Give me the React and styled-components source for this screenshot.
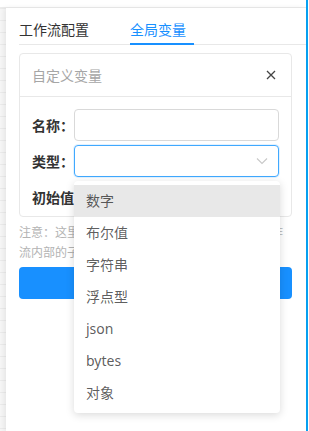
import React from "react";
import styled, { createGlobalStyle } from "styled-components";

const Global = createGlobalStyle`
  html, body { margin: 0; padding: 0; background: #fff; }
  body {
    font-family: "Noto Sans", "Noto Sans CJK SC", sans-serif;
    font-size: 14px;
    color: rgba(0,0,0,0.65);
  }
  * { box-sizing: border-box; }
`;

const Page = styled.div`
  display: flex;
  width: 309px;
  height: 431px;
  overflow: hidden;
`;

const Main = styled.div`
  flex: 1;
  display: flex;
  flex-direction: column;
  min-width: 0;
`;

const TopBar = styled.div`
  height: 8px;
  flex: none;
  border-bottom: 1px solid #ececec;
  background: #fff;
`;

const Body = styled.div`
  flex: 1;
  display: flex;
`;

const GridStrip = styled.div`
  width: 6px;
  flex: none;
  background-color: #f6f6f6;
  background-image: linear-gradient(#ebebeb 1px, transparent 1px);
  background-size: 6px 12px;
`;

const Panel = styled.div`
  flex: 1;
  background: #fff;
  box-shadow: -2px 0 5px rgba(0,0,0,0.07);
  padding-left: 13px;
  position: relative;
  z-index: 1;
`;

const BlueBar = styled.div`
  width: 2px;
  flex: none;
  background: #07a1f2;
`;

const Tail = styled.div`
  width: 1px;
  flex: none;
  background: #fff;
`;

const TabBar = styled.div`
  display: flex;
  gap: 41px;
  padding-top: 11px;
  border-bottom: 1px solid #e8e8e8;
`;

const Tab = styled.div`
  position: relative;
  height: 25px;
  line-height: 22px;
  font-size: 14px;
  color: ${p => (p.$active ? "#1890ff" : "#333")};
  white-space: nowrap;
  &::after {
    content: "";
    display: ${p => (p.$active ? "block" : "none")};
    position: absolute;
    left: 0;
    bottom: -1px;
    width: 64px;
    height: 2px;
    background: #1890ff;
  }
`;

const Content = styled.div`
  padding: 8px 14px 0 0;
`;

const Card = styled.div`
  border: 1px solid #e8e8e8;
  border-radius: 4px;
`;

const CardHeader = styled.div`
  height: 43px;
  display: flex;
  align-items: center;
  justify-content: space-between;
  padding: 0 14px 0 12px;
  border-bottom: 1px solid #e8e8e8;
  color: #a6a6a6;
  font-size: 14px;
`;

const CloseBtn = styled.span`
  display: flex;
  width: 12px;
  height: 12px;
  align-items: center;
  justify-content: center;
`;

const CardBody = styled.div`
  padding: 12px 12px 3px 12px;
  display: flex;
  flex-direction: column;
  gap: 4px;
`;

const Row = styled.div`
  display: flex;
  align-items: center;
  height: 32px;
`;

const Label = styled.label`
  width: 42px;
  flex: none;
  font-weight: bold;
  color: #333;
  font-size: 14px;
  white-space: nowrap;
`;

const Field = styled.div`
  position: relative;
  flex: 1;
  height: 32px;
`;

const Input = styled.div`
  height: 32px;
  border: 1px solid ${p => (p.$focus ? "#40a9ff" : "#d9d9d9")};
  border-radius: 4px;
  background: #fff;
  display: flex;
  align-items: center;
  justify-content: flex-end;
  padding-right: 10px;
  box-shadow: ${p => (p.$focus ? "0 0 0 1px rgba(24,144,255,0.12)" : "none")};
`;

const Note = styled.div`
  margin-top: 6px;
  font-size: 12px;
  line-height: 20px;
  color: #b3b3b3;
  padding-right: 4px;
`;

const Button = styled.div`
  margin-top: 4px;
  height: 32px;
  border-radius: 4px;
  background: #1890ff;
  color: #fff;
  display: flex;
  align-items: center;
  justify-content: center;
  font-size: 14px;
`;

const Dropdown = styled.ul`
  position: absolute;
  top: calc(100% + 4px);
  left: 0;
  width: calc(100% + 1px);
  margin: 0;
  padding: 4px 0;
  list-style: none;
  background: #fff;
  border-radius: 4px;
  box-shadow: 0 2px 8px rgba(0,0,0,0.15);
  z-index: 10;
`;

const Option = styled.li`
  height: 32px;
  line-height: 32px;
  padding: 0 12px;
  font-size: 14px;
  color: rgba(0,0,0,0.65);
  background: ${p => (p.$active ? "#e8e8e8" : "#fff")};
`;

const options = ["数字", "布尔值", "字符串", "浮点型", "json", "bytes", "对象"];

export default function App() {
  return (
    <>
      <Global />
      <Page>
        <Main>
          <TopBar />
          <Body>
            <GridStrip />
            <Panel>
              <TabBar>
                <Tab>工作流配置</Tab>
                <Tab $active>全局变量</Tab>
              </TabBar>
              <Content>
                <Card>
                  <CardHeader>
                    <span>自定义变量</span>
                    <CloseBtn>
                      <svg width="10" height="10" viewBox="0 0 10 10">
                        <path d="M1 1L9 9M9 1L1 9" stroke="#444" strokeWidth="1.3" fill="none" />
                      </svg>
                    </CloseBtn>
                  </CardHeader>
                  <CardBody>
                    <Row>
                      <Label>名称：</Label>
                      <Field>
                        <Input />
                      </Field>
                    </Row>
                    <Row>
                      <Label>类型：</Label>
                      <Field>
                        <Input $focus>
                          <svg width="12" height="8" viewBox="0 0 12 8">
                            <path d="M1 1.5L6 6.5L11 1.5" stroke="#c8c8c8" strokeWidth="1.1" fill="none" />
                          </svg>
                        </Input>
                        <Dropdown>
                          {options.map((o, i) => (
                            <Option key={o} $active={i === 0}>{o}</Option>
                          ))}
                        </Dropdown>
                      </Field>
                    </Row>
                    <Row>
                      <Label>初始值：</Label>
                    </Row>
                  </CardBody>
                </Card>
                <Note>注意：这里定义的变量为全局变量，可在整个工作流内部的子流程中使用</Note>
                <Button>确定</Button>
              </Content>
            </Panel>
          </Body>
        </Main>
        <BlueBar />
        <Tail />
      </Page>
    </>
  );
}
